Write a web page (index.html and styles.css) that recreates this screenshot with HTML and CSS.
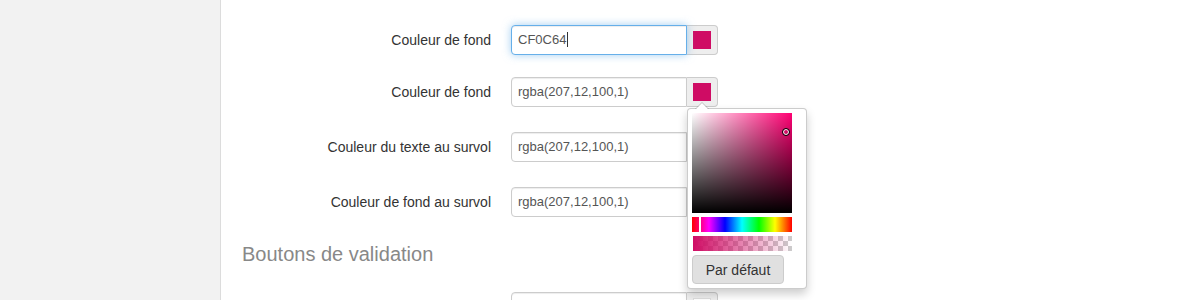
FILE: index.html
```html
<!DOCTYPE html>
<html lang="fr">
<head>
<meta charset="utf-8">
<title>Couleurs</title>
<link rel="stylesheet" href="styles.css">
</head>
<body>
<div class="layout">
  <aside class="sidebar"></aside>
  <main class="main">
    <div class="form">
      <div class="row row-first">
        <div class="label">Couleur de fond</div>
        <div class="group">
          <div class="field focused">CF0C64<span class="caret"></span></div>
          <div class="addon"><span class="swatch"></span></div>
        </div>
      </div>
      <div class="row">
        <div class="label">Couleur de fond</div>
        <div class="group">
          <div class="field">rgba(207,12,100,1)</div>
          <div class="addon"><span class="swatch"></span></div>
          <div class="picker">
            <div class="sat">
              <span class="sat-cursor"></span>
            </div>
            <div class="hue"><span class="hue-cursor"></span></div>
            <div class="alpha"></div>
            <button class="btn-default">Par défaut</button>
          </div>
        </div>
      </div>
      <div class="row">
        <div class="label">Couleur du texte au survol</div>
        <div class="group">
          <div class="field">rgba(207,12,100,1)</div>
          <div class="addon"><span class="swatch"></span></div>
        </div>
      </div>
      <div class="row">
        <div class="label">Couleur de fond au survol</div>
        <div class="group">
          <div class="field">rgba(207,12,100,1)</div>
          <div class="addon"><span class="swatch"></span></div>
        </div>
      </div>
    </div>
    <h3 class="section-title">Boutons de validation</h3>
    <div class="form">
      <div class="row">
        <div class="label"></div>
        <div class="group">
          <div class="field"></div>
          <div class="addon"><span class="swatch swatch-white"></span></div>
        </div>
      </div>
    </div>
  </main>
</div>
</body>
</html>
```

FILE: styles.css
```css
html, body {
  margin: 0;
  padding: 0;
  height: 300px;
  overflow: hidden;
  background: #fff;
  font-family: "Liberation Sans", Arial, sans-serif;
  font-size: 14px;
  color: #333;
}

.layout {
  display: flex;
  min-height: 300px;
}

.sidebar {
  width: 221px;
  box-sizing: border-box;
  flex: none;
  background: #f2f2f2;
  border-right: 1px solid #dcdcdc;
}

.main {
  flex: 1;
  padding: 25px 0 0 21px;
}

.form {
  display: flex;
  flex-direction: column;
  gap: 25px;
}

.row {
  display: grid;
  grid-template-columns: 249px 207px;
  column-gap: 20px;
  align-items: center;
}

.row-first {
  margin-bottom: -3px;
}

.label {
  text-align: right;
  line-height: 30px;
  min-height: 30px;
  color: #333;
}

.group {
  position: relative;
  display: flex;
  height: 30px;
}

.field {
  width: 176px;
  height: 30px;
  box-sizing: border-box;
  border: 1px solid #ccc;
  border-radius: 4px 0 0 4px;
  padding: 0 6px;
  font-size: 13px;
  line-height: 28px;
  color: #555;
  box-shadow: inset 0 1px 1px rgba(0,0,0,.075);
  background: #fff;
  white-space: nowrap;
}

.field.focused {
  border-color: #66afe9;
  box-shadow: inset 0 1px 1px rgba(0,0,0,.075), 0 0 8px rgba(102,175,233,.6);
  position: relative;
  z-index: 1;
}

.caret {
  display: inline-block;
  width: 1px;
  height: 15px;
  background: #333;
  vertical-align: -3px;
  margin-left: 1px;
}

.addon {
  width: 31px;
  height: 30px;
  box-sizing: border-box;
  border: 1px solid #ccc;
  border-left: 0;
  border-radius: 0 4px 4px 0;
  background: #eee;
  display: flex;
  align-items: center;
  justify-content: center;
  padding-right: 1px;
}

.swatch {
  width: 18px;
  height: 18px;
  background: #cf0c64;
}

.swatch-white {
  background: #fff;
  box-shadow: inset 0 0 0 1px #ddd;
}

.picker {
  position: absolute;
  top: 31px;
  left: 176px;
  width: 120px;
  box-sizing: border-box;
  padding: 4px 14px 4px 4px;
  background: #fff;
  border: 1px solid rgba(0,0,0,.2);
  border-radius: 4px;
  box-shadow: 0 5px 10px rgba(0,0,0,.2);
  z-index: 5;
  display: flex;
  flex-direction: column;
  gap: 4px;
}

.picker::before {
  content: "";
  position: absolute;
  top: -7px;
  left: 7px;
  border-left: 7px solid transparent;
  border-right: 7px solid transparent;
  border-bottom: 7px solid rgba(0,0,0,.2);
}

.picker::after {
  content: "";
  position: absolute;
  top: -6px;
  left: 8px;
  border-left: 6px solid transparent;
  border-right: 6px solid transparent;
  border-bottom: 6px solid #fff;
}

.sat {
  position: relative;
  width: 100px;
  height: 100px;
  background:
    linear-gradient(to top, #000, rgba(0,0,0,0)),
    linear-gradient(to right, #fff, rgba(255,255,255,0)),
    #ff0073;
}

.sat-cursor {
  position: absolute;
  left: 90px;
  top: 15px;
  width: 6px;
  height: 6px;
  border: 1px solid #000;
  border-radius: 50%;
  box-shadow: inset 0 0 0 1px #fff;
}

.hue {
  position: relative;
  width: 100px;
  height: 15px;
  background: linear-gradient(to right, #f00 0%, #f0f 17%, #00f 33%, #0ff 50%, #0f0 67%, #ff0 83%, #f00 100%);
}

.hue-cursor {
  position: absolute;
  left: 7px;
  top: 0;
  width: 2px;
  height: 15px;
  background: #fff;
}

.alpha {
  width: 99px;
  height: 15px;
  margin-left: 1px;
  background:
    linear-gradient(to right, rgba(207,12,100,1), rgba(207,12,100,0)),
    repeating-conic-gradient(#cccccc 0 25%, #ffffff 0 50%) 0 0 / 10px 10px;
}

.btn-default {
  width: 92px;
  height: 29px;
  box-sizing: border-box;
  border: 1px solid #ccc;
  border-radius: 4px;
  background: #e0e0e0;
  color: #333;
  font-family: "Liberation Sans", Arial, sans-serif;
  font-size: 14px;
  padding: 0 6px;
  cursor: pointer;
}

.section-title {
  margin: 26px 0 27px;
  font-size: 20px;
  line-height: 22px;
  font-weight: normal;
  color: #888;
}
```
